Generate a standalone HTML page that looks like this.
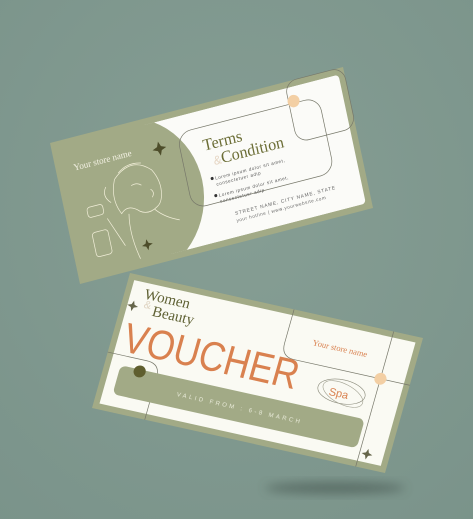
<!DOCTYPE html>
<html><head><meta charset="utf-8"><style>
html,body{margin:0;padding:0;width:473px;height:519px;overflow:hidden;background:#819990;}
svg{display:block}
</style></head><body>
<svg width="473" height="519" viewBox="0 0 473 519" font-family="Liberation Sans, sans-serif">
<defs>
<radialGradient id="bg" cx="0.5" cy="0.4" r="0.8"><stop offset="0" stop-color="#869e94"/><stop offset="1" stop-color="#7a938a"/></radialGradient>
<filter id="blur" x="-20%" y="-50%" width="140%" height="200%"><feGaussianBlur stdDeviation="5"/></filter>
<clipPath id="wclip"><rect x="6" y="6" width="288" height="128" rx="4"/></clipPath>
</defs>
<rect width="473" height="519" fill="url(#bg)"/>
<ellipse cx="335" cy="488" rx="70" ry="6" fill="#3f4f48" opacity="0.55" filter="url(#blur)"/>

<!-- TOP CARD -->
<g transform="matrix(0.9767,-0.2533,0.2143,1.0071,50,143)">
  <rect x="0" y="0" width="300" height="140" fill="#a2aa86"/>
  <g clip-path="url(#wclip)">
    <rect x="95" y="6" width="205" height="128" fill="#fbfbf8"/>
    <circle cx="60" cy="72" r="80" fill="#a2aa86"/>
  </g>
  <rect x="125" y="22" width="145" height="75" rx="14" fill="none" stroke="#77786a" stroke-width="0.7"/>
  <rect x="240" y="0" width="60" height="60" rx="12" fill="none" stroke="#77786a" stroke-width="0.7"/>
  <circle cx="245" cy="20" r="6" fill="#f3cfa4"/>
  <text x="148" y="45" font-size="16" fill="#6b6d35" font-family="Liberation Serif, serif">Terms</text>
  <text x="163" y="61" font-size="16" fill="#6b6d35" font-family="Liberation Serif, serif">Condition</text>
  <text x="155" y="61" font-size="12" fill="#e6d6c4">&amp;</text>
  <circle cx="150" cy="73" r="1.5" fill="#333"/>
  <text x="153" y="75" font-size="4.5" fill="#555" letter-spacing="0.6">Lorem ipsum dolor sit amet,</text>
  <text x="153" y="81" font-size="4.5" fill="#555" letter-spacing="0.6">consectetuer adip</text>
  <circle cx="150" cy="90" r="1.5" fill="#333"/>
  <text x="153" y="92" font-size="4.5" fill="#555" letter-spacing="0.6">Lorem ipsum dolor sit amet,</text>
  <text x="153" y="98" font-size="4.5" fill="#555" letter-spacing="0.6">consectetuer adip</text>
  <text x="165" y="113" font-size="4.8" fill="#666" letter-spacing="0.8">STREET NAME, CITY NAME, STATE</text>
  <text x="165" y="120" font-size="4.5" fill="#666" letter-spacing="0.6">your hotline | www.yourwebsite.com</text>
  <text x="18" y="32" font-size="9" fill="#f4f2e4" font-family="Liberation Serif, serif">Your store name</text>
  <g fill="none" stroke="#f1eed8" stroke-width="0.7">
    <path d="M55 50 q20 -18 38 0 q8 14 4 28 q-2 6 -6 8 q-10 6 -18 0 q-10 -10 -18 -2 q-8 -16 0 -34z"/>
    <path d="M60 45 q10 -8 24 -4 M70 60 q6 -2 10 2 M88 68 q4 4 0 8"/>
    <path d="M62 86 q-4 20 2 45 M88 88 q8 10 22 16"/>
    <path d="M45 55 q-6 8 2 16"/>
    <rect x="22" y="70" width="16" height="10" rx="3"/>
    <rect x="22" y="95" width="16" height="24" rx="3"/>
    <path d="M40 85 l12 30"/>
  </g>
  <path d="M103 30 l2 -5 l2 5 l5 2 l-5 2 l-2 5 l-2 -5 l-5 -2z" fill="#4d4d2a"/>
  <path d="M72 118 l1.5 -4 l1.5 4 l4 1.5 l-4 1.5 l-1.5 4 l-1.5 -4 l-4 -1.5z" fill="#4d4d2a"/>
</g>

<!-- BOTTOM CARD -->
<g transform="matrix(0.9767,0.2167,-0.2714,0.9643,130,273)">
  <rect x="0" y="0" width="300" height="140" fill="#a2aa86"/>
  <rect x="6" y="6" width="288" height="128" fill="#fafaf3"/>
  <path d="M168 0 V35 q0 14 14 14 H300" fill="none" stroke="#77786a" stroke-width="0.7"/>
  <path d="M270 0 V140" fill="none" stroke="#77786a" stroke-width="0.7"/>
  <path d="M0 82 H40 q14 0 14 14 V140" fill="none" stroke="#77786a" stroke-width="0.7"/>
  <rect x="16" y="92" width="250" height="30" rx="6" fill="#a2aa86"/>
  <circle cx="36" cy="94" r="6" fill="#5f5e2e"/>
  <text x="78" y="110" font-size="6" fill="#e8ead8" letter-spacing="2.5">VALID FROM : 6-8 MARCH</text>
  <text x="20" y="22" font-size="15" fill="#5f6134" font-family="Liberation Serif, serif">Women</text>
  <text x="22" y="31" font-size="11" fill="#dfd4c2">&amp;</text>
  <text x="32" y="37" font-size="15" fill="#5f6134" font-family="Liberation Serif, serif">Beauty</text>
  <path d="M10 30 l1.5 -4 l1.5 4 l4 1.5 l-4 1.5 l-1.5 4 l-1.5 -4 l-4 -1.5z" fill="#66664a"/>
  <text x="12" y="78" font-size="42" fill="#d9814f" textLength="178" lengthAdjust="spacingAndGlyphs">VOUCHER</text>
  <text x="195" y="31" font-size="8.5" fill="#d9814f" font-family="Liberation Serif, serif">Your store name</text>
  <circle cx="270" cy="49" r="6" fill="#f3cfa4"/>
  <ellipse cx="236" cy="70" rx="24" ry="12" fill="none" stroke="#8a8a7a" stroke-width="0.6"/>
  <ellipse cx="238" cy="72" rx="22" ry="10" fill="none" stroke="#a0a090" stroke-width="0.6" transform="rotate(15 238 72)"/>
  <text x="224" y="76" font-size="11" fill="#d9814f">Spa</text>
  <path d="M276 124 l1.5 -4 l1.5 4 l4 1.5 l-4 1.5 l-1.5 4 l-1.5 -4 l-4 -1.5z" fill="#66664a"/>
</g>
</svg>
</body></html>
